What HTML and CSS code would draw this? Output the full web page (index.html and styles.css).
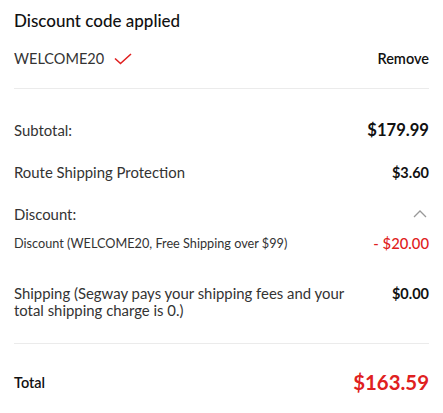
FILE: index.html
```html
<!DOCTYPE html>
<html>
<head>
<meta charset="utf-8">
<link rel="stylesheet" href="styles.css">
</head>
<body>
<div class="summary">
  <section class="code-block">
    <h2 class="title">Discount code applied</h2>
    <div class="code-row">
      <div class="code">
        <span>WELCOME20</span>
        <svg class="check" width="18" height="12" viewBox="0 0 18 12"><path d="M1 5.5 L6.5 10.5 L17 1" fill="none" stroke="#e02020" stroke-width="1.6"/></svg>
      </div>
      <span class="remove">Remove</span>
    </div>
  </section>
  <section class="lines">
    <div class="row row-sub">
      <span class="label">Subtotal:</span>
      <span class="value big">$179.99</span>
    </div>
    <div class="row row-route">
      <span class="label">Route Shipping Protection</span>
      <span class="value">$3.60</span>
    </div>
    <div class="row row-disc">
      <span class="label">Discount:</span>
      <svg class="chev" width="14" height="8" viewBox="0 0 14 8"><path d="M1 7 L7 1 L13 7" fill="none" stroke="#999" stroke-width="1.3"/></svg>
    </div>
    <div class="row row-discline">
      <span class="label small">Discount (WELCOME20, Free Shipping over $99)</span>
      <span class="value red">- $20.00</span>
    </div>
    <div class="row row-ship">
      <span class="label ship">Shipping (Segway pays your shipping fees and your total shipping charge is 0.)</span>
      <span class="value">$0.00</span>
    </div>
  </section>
  <section class="total">
    <span class="total-label">Total</span>
    <span class="total-value">$163.59</span>
  </section>
</div>
</body>
</html>
```
FILE: styles.css
```css
* { box-sizing: border-box; }
body {
  margin: 0;
  background: #fff;
  font-family: "Lato", "Noto Sans", sans-serif;
  color: #333;
}
.summary {
  padding: 0 14px;
  width: 443px;
}
.code-block {
  padding-top: 10px;
  padding-bottom: 20px;
  border-bottom: 1px solid #ebebeb;
}
.title {
  margin: 0;
  font-size: 17px;
  font-weight: 500;
  color: #111;
  line-height: 22px;
}
.code-row {
  display: flex;
  justify-content: space-between;
  align-items: center;
  margin-top: 16px;
  height: 20px;
}
.code {
  display: flex;
  align-items: center;
  gap: 10px;
  font-size: 14.5px;
  color: #333;
}
.check { margin-top: 2px; }
.remove {
  font-size: 14.5px;
  font-weight: 600;
  color: #111;
}
.lines {
  padding-top: 30px;
  padding-bottom: 24px;
  border-bottom: 1px solid #ebebeb;
  display: flex;
  flex-direction: column;
}
.row {
  display: flex;
  justify-content: space-between;
  align-items: center;
}
.label { font-size: 14.9px; color: #333; }
.label.small { font-size: 12.7px; }
.value { font-size: 14.5px; font-weight: 700; color: #111; }
.value.big { font-size: 16.6px; }
.value.red { color: #e02020; font-weight: 500; font-size: 14.8px; }
.row-sub { height: 22px; }
.row-route { height: 22px; margin-top: 20px; }
.row-disc { height: 22px; margin-top: 20px; }
.chev { margin-right: 2px; }
.row-discline { height: 20px; margin-top: 8px; }
.row-ship { margin-top: 32px; align-items: flex-start; }
.label.ship { width: 350px; line-height: 17px; }
.row-ship .value { line-height: 17px; }
.total {
  display: flex;
  justify-content: space-between;
  align-items: center;
  padding-top: 26px;
}
.total-label { font-size: 14.5px; font-weight: 600; color: #111; }
.total-value { font-size: 20.4px; font-weight: 700; color: #e02020; }
```
